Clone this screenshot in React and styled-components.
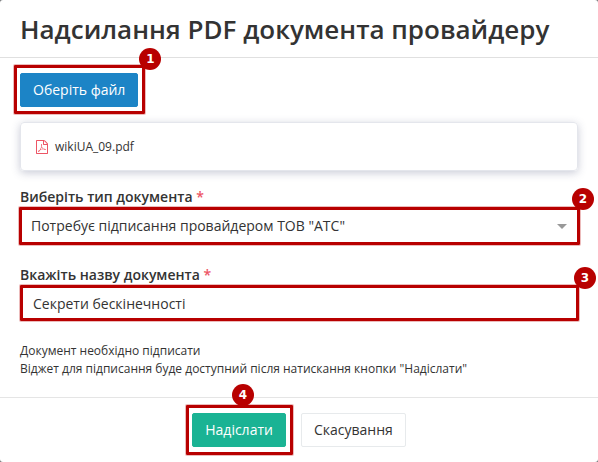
import React from "react";
import styled, { createGlobalStyle } from "styled-components";

const accent = "#b80000";

const GlobalStyle = createGlobalStyle`
  *, *::before, *::after { box-sizing: border-box; }
  body {
    margin: 0;
    background: #77797b;
    color: #333;
    font: 14px/20px "Open Sans", "Noto Sans", sans-serif;
  }
`;

const Dialog = styled.form`
  background: #fff;
  border-radius: 3px;
`;

const Header = styled.header`
  padding: 13px 20px 11px;
  border-bottom: 1px solid #e0e0e0;
`;

const Title = styled.h1`
  margin: 0;
  font-size: 26px;
  line-height: 33px;
  font-weight: 600;
`;

const Body = styled.main`
  display: flex;
  flex-direction: column;
  padding: 15px 20px 19px;
`;

const Footer = styled.footer`
  display: flex;
  justify-content: center;
  gap: 15px;
  padding: 15px 20px;
  border-top: 1px solid #e5e5e5;
`;

const Marked = styled.div`
  position: relative;
  align-self: ${(p) => (p.$fill ? "stretch" : "flex-start")};
`;

const Frame = styled.span`
  position: absolute;
  inset: ${(p) => p.$inset};
  border: 3px solid ${accent};
  border-radius: 1px;
  box-shadow: 0 0 0 1px #b8000044;
  pointer-events: none;
`;

const Badge = styled.span`
  position: absolute;
  top: ${(p) => p.$top};
  right: ${(p) => p.$right};
  width: 22px;
  height: 22px;
  border-radius: 50%;
  background: ${accent};
  color: #fff;
  font: bold 12px/22px "DejaVu Sans", sans-serif;
  text-align: center;
  pointer-events: none;
`;

const Button = styled.button`
  display: block;
  height: 34px;
  padding: 0 12px;
  border: 1px solid ${(p) => p.$border || p.$color};
  border-radius: 2px;
  background: ${(p) => p.$color};
  color: ${(p) => p.$text || "#fff"};
  font: inherit;
  cursor: pointer;
`;

const FileCard = styled.div`
  display: flex;
  align-items: center;
  gap: 7px;
  height: 49px;
  margin: 15px 0 16px;
  padding: 0 15px;
  border: 1px solid #e4e6ec;
  border-radius: 4px;
  box-shadow: 0 2px 8px rgba(60, 70, 110, 0.28);
  font-size: 12px;
`;

const PdfGlyph = styled.svg`
  width: 12px;
  height: 14px;
  fill: #ed5565;
`;

const Label = styled.label`
  font-weight: 600;
  line-height: 20px;
`;

const Required = styled.span`
  color: #ed5565;
`;

const SelectBox = styled.div`
  position: relative;
  margin: 1px 0 21px;
`;

const Select = styled.select`
  display: block;
  width: 100%;
  height: 36px;
  padding: 0 30px 0 11px;
  border: 0;
  background: #fff;
  color: inherit;
  font: inherit;
  appearance: none;
`;

const Caret = styled.span`
  position: absolute;
  top: 16px;
  right: 11px;
  border: 5px solid transparent;
  border-top-color: #999;
  border-bottom: 0;
  pointer-events: none;
`;

const Input = styled.input`
  display: block;
  width: 100%;
  height: 34px;
  margin-top: 1px;
  padding: 0 13px;
  border: 0;
  background: #fff;
  color: inherit;
  font: inherit;
`;

const Note = styled.p`
  margin: 22px 0 0;
  font-size: 12px;
  line-height: 18px;
`;

function PdfIcon() {
  return (
    <PdfGlyph viewBox="0 0 1536 1792" aria-hidden="true">
      <path d="M1468 380q28 28 48 76t20 88v1152q0 40-28 68t-68 28h-1344q-40 0-68-28t-28-68v-1600q0-40 28-68t68-28h896q40 0 88 20t76 48zm-444-244v376h376q-10-29-22-41l-313-313q-12-12-41-22zm384 1528v-1024h-416q-40 0-68-28t-28-68v-416h-768v1536h1280zm-514-593q33 26 84 56 59-7 117-7 147 0 177 49 16 22 2 52 0 1-1 2l-2 2v1q-6 38-71 38-48 0-115-20t-130-53q-221 24-392 83-153 262-242 262-15 0-28-7l-24-12q-1-1-6-5-10-10-6-36 9-40 56-91.500t132-96.500q14-9 23 6 2 2 2 4 52-85 107-197 68-136 104-262-24-82-30.500-159.500t6.500-127.500q11-40 42-40h22q23 0 35 15 18 21 9 68-2 6-4 8 1 3 1 8v30q-2 123-14 192 55 164 146 238zm-576 411q52-24 137-158-51 40-87.500 84t-49.500 74zm398-920q-15 42-2 132 1-7 7-44 0-3 7-43 1-4 4-8-1-1-1-2-1-2-1-3-1-22-13-36 0 1-1 2v2zm-124 661q135-54 284-81-2-1-13-9.500t-16-13.500q-76-67-127-176-27 86-83 197-30 56-45 83zm646-16q-24-24-140-24 76 28 124 28 14 0 18-1 0-1-2-3z" />
    </PdfGlyph>
  );
}

export default function App() {
  return (
    <>
      <GlobalStyle />
      <Dialog onSubmit={(e) => e.preventDefault()}>
        <Header>
          <Title>Надсилання PDF документа провайдеру</Title>
        </Header>
        <Body>
          <Marked>
            <Button type="button" $color="#1c84c6">Оберіть файл</Button>
            <Frame $inset="-8px -7px -7px -6px" />
            <Badge $top="-25px" $right="-23px">1</Badge>
          </Marked>
          <FileCard>
            <PdfIcon />
            <span>wikiUA_09.pdf</span>
          </FileCard>
          <Label htmlFor="doc-type">
            Виберіть тип документа <Required>*</Required>
          </Label>
          <SelectBox>
            <Select id="doc-type" defaultValue="atc">
              <option value="atc">Потребує підписання провайдером ТОВ "АТС"</option>
            </Select>
            <Caret />
            <Frame $inset="-1px -2px -1px -1px" />
            <Badge $top="-20px" $right="-16px">2</Badge>
          </SelectBox>
          <Label htmlFor="doc-name">
            Вкажіть назву документа <Required>*</Required>
          </Label>
          <Marked $fill>
            <Input id="doc-name" type="text" defaultValue="Секрети бескінечності" />
            <Frame $inset="0 -1px -1px 0" />
            <Badge $top="-18px" $right="-18px">3</Badge>
          </Marked>
          <Note>
            Документ необхідно підписати
            <br />
            Віджет для підписання буде доступний після натискання кнопки "Надіслати"
          </Note>
        </Body>
        <Footer>
          <Marked>
            <Button type="submit" $color="#1ab394">Надіслати</Button>
            <Frame $inset="-8px -7px -8px -6px" />
            <Badge $top="-29px" $right="32px">4</Badge>
          </Marked>
          <Button type="button" $color="#fff" $border="#e7eaec" $text="#333">
            Скасування
          </Button>
        </Footer>
      </Dialog>
    </>
  );
}
